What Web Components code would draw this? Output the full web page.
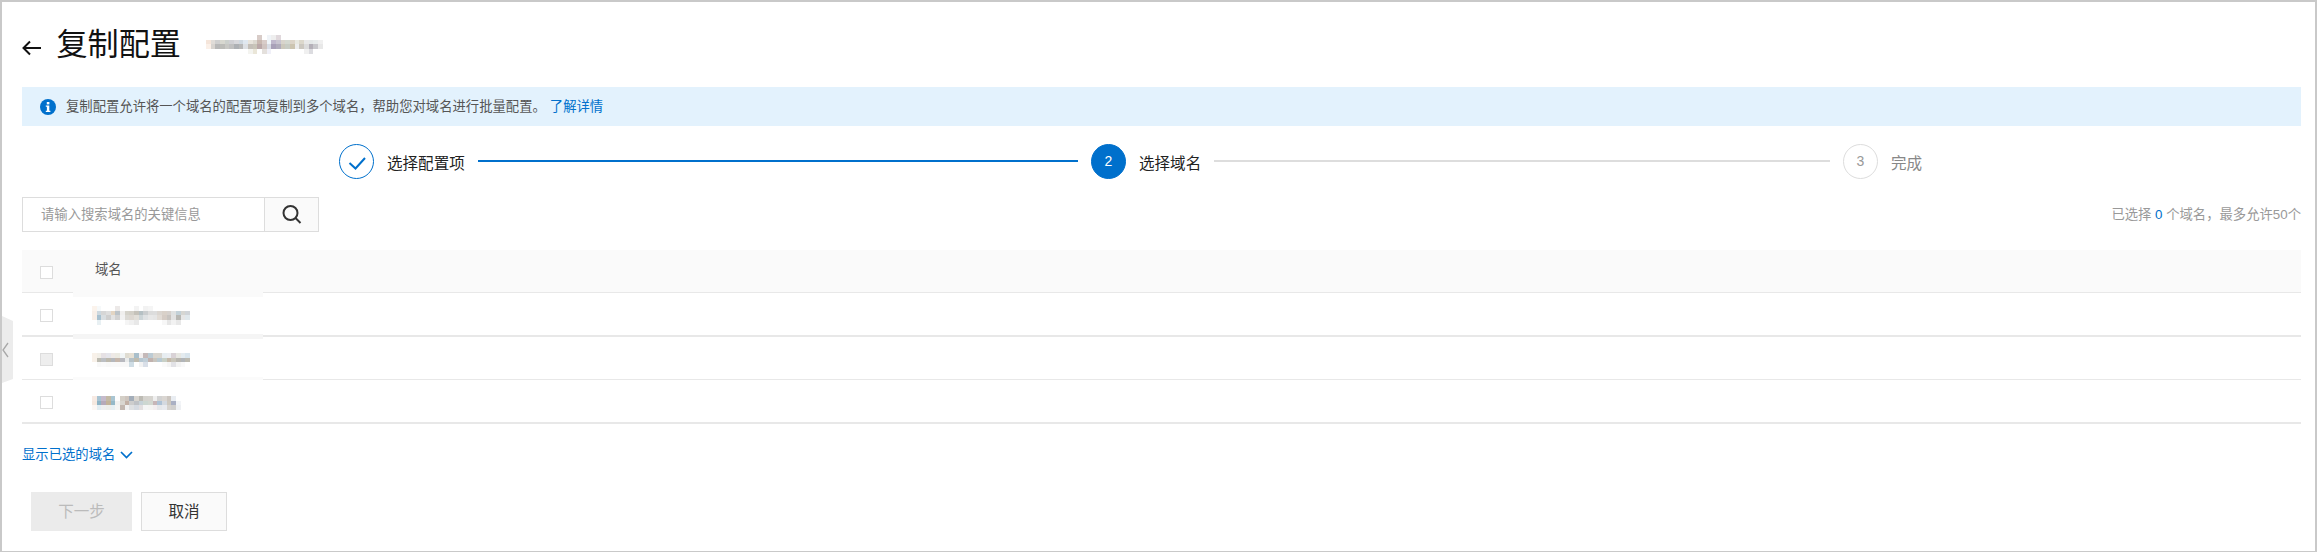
<!DOCTYPE html>
<html lang="zh-CN">
<head>
<meta charset="utf-8">
<title>复制配置</title>
<style>
html,body{margin:0;padding:0;background:#fff;}
body{font-family:"Liberation Sans","Noto Sans CJK SC",sans-serif;font-size:13.33px;color:#333;}
</style>
</head>
<body>
<app-page>
  <page-header slot="header" title-text="复制配置"></page-header>
  <info-banner link="了解详情">复制配置允许将一个域名的配置项复制到多个域名，帮助您对域名进行批量配置。</info-banner>
  <step-bar></step-bar>
  <search-bar></search-bar>
  <domain-table></domain-table>
  <show-selected></show-selected>
  <action-bar></action-bar>
</app-page>
<script>
const FONT='"Liberation Sans","Noto Sans CJK SC",sans-serif';
function def(name,html,init){
  customElements.define(name,class extends HTMLElement{
    constructor(){super();const r=this.attachShadow({mode:'open'});r.innerHTML=typeof html==='function'?html(this):html;}
    connectedCallback(){if(init)init(this);}
  });
}
/* mosaic: pixelated, obscured text */
class BlurMosaic extends HTMLElement{
  constructor(){super();this.attachShadow({mode:'open'});}
  connectedCallback(){
    const cell=parseFloat(this.getAttribute('cell')||'4.67');
    const rows=(this.getAttribute('rows')||'').trim().split('|').map(r=>r.trim().split(/\s+/));
    const cols=Math.max(...rows.map(r=>r.length));
    let rects='';
    rows.forEach((r,y)=>r.forEach((c,x)=>{if(c!=='-')rects+=`<rect x="${x}" y="${y}" width="1.02" height="1.02" fill="#${c}"/>`;}));
    this.shadowRoot.innerHTML=`<style>:host{display:inline-block;line-height:0}svg{display:block}</style><svg width="${cols*cell}" height="${rows.length*cell}" viewBox="0 0 ${cols} ${rows.length}" shape-rendering="crispEdges">${rects}</svg>`;
  }
}
customElements.define('blur-mosaic',BlurMosaic);

def('app-page',`<style>
:host{display:block;box-sizing:border-box;position:relative;width:2317px;height:552px;border:2px solid #c9c9c9;border-bottom-width:1px;padding:0 14px 0 20px;overflow:hidden;background:#fff;font-family:${FONT};}
.handle{position:absolute;left:0;top:314px;}
</style>
<slot name="header"></slot><slot></slot>
<svg class="handle" width="12" height="68" viewBox="0 0 12 68"><path d="M0 0L11 5V63L0 67Z" fill="#ececec"/><path d="M6 27L1 34L6 41" fill="none" stroke="#a8a8a8" stroke-width="1.3"/></svg>`);

def('page-header',h=>`<style>
:host{display:flex;align-items:center;height:85px;}
svg{display:block;margin-top:7px;flex:none;}
h1{margin:0 0 0 14.5px;font:400 31.1px/40px ${FONT};color:#111;}
blur-mosaic{margin:0 0 0 25px;}
</style>
<svg width="20" height="16" viewBox="0 0 20 16"><path d="M1.5 8H19M8 1.5L1.5 8L8 14.5" fill="none" stroke="#111" stroke-width="2"/></svg>
<h1>${h.getAttribute('title-text')}</h1>
<blur-mosaic rows="- - - - - - - - - - - d8ccc8 - f0f4f8 eeeeee e0d8dc - - - - - - - - -|f5e5da e0dcd8 cfcfcf d8d8d0 ccd0cc d0d0d4 d8d8dc cfd8e0 e0e8f0 e8e4dc dcd8d0 c8b8b0 d8ccc8 eef4f8 bfb8cc c8c4d0 d8d4cc d4d8d0 dcd4c8 e8e8e0 dcd8cc e8e8e8 e4e8e8 e8ecec f0f0f0|fbf0e8 d8d4d0 b8b8b8 bcbcb8 c8c8c4 c0c0c0 adb0b4 b8b8b8 dde0e4 c4bfb8 c8c4b8 baa8a8 d0c4c0 d8dce4 a8a0b8 b0acbc ccc8bc c8ccc4 ccc4b0 ececec ccc8c0 dcdcdc b4b0b8 c8c8cc e8e8e8|- - - - - - - - - f4f4f0 eae6d8 - e4e0dc f0f0f8 - - - - - - - f0f0f0 dcdce0 - -"></blur-mosaic>`);

def('info-banner',h=>`<style>
:host{display:flex;align-items:center;height:39px;background:#e3f2fd;padding-left:18px;font:13.33px/20px ${FONT};color:#555;}
svg{display:block;margin-right:10px;flex:none;}
a{color:#0070cc;text-decoration:none;margin-left:4px;}
</style>
<svg width="16" height="16" viewBox="0 0 16 16"><circle cx="8" cy="8" r="8" fill="#0070cc"/><rect x="6.8" y="3" width="2.6" height="2.4" fill="#fff"/><path d="M5.8 6.6H9.3V11.8H10.4V13H5.8V11.8H6.9V7.8H5.8Z" fill="#fff"/></svg>
<span><slot></slot></span><a href="#" part="link">${h.getAttribute('link')}</a>`);

def('step-bar',`<style>
:host{display:flex;margin:18px 0 18px 317px;height:35px;font:15.55px/35px ${FONT};}
.step{display:flex;align-items:center;width:752px;flex:none;}
.step.last{width:auto;}
.c{box-sizing:border-box;width:35px;height:35px;border-radius:50%;border:1px solid #0070cc;display:flex;align-items:center;justify-content:center;font-size:14px;flex:none;background:#fff;}
.c.on{background:#0070cc;color:#fff;}
.c.off{border-color:#ddd;color:#999;}
.l{margin-left:13px;color:#222;padding-top:3px;}
.l.off{color:#888;}
.line{flex:1;height:2px;margin:-1px 13px 0;background:#0070cc;}
.line.off{background:#ddd;}
</style>
<div class="step"><div class="c"><svg width="35" height="35" viewBox="0 0 35 35" style="flex:none"><path d="M10.5 19L16.5 24.5L26 14" fill="none" stroke="#0070cc" stroke-width="2"/></svg></div><span class="l">选择配置项</span><div class="line"></div></div>
<div class="step"><div class="c on">2</div><span class="l">选择域名</span><div class="line off"></div></div>
<div class="step last"><div class="c off">3</div><span class="l off">完成</span></div>`);

def('search-bar',`<style>
:host{display:flex;justify-content:space-between;align-items:center;height:35px;margin-bottom:18px;font:13.33px/20px ${FONT};}
.box{display:flex;box-sizing:border-box;width:297px;height:35px;border:1px solid #ddd;}
.ph{flex:1;padding-left:18px;line-height:33px;color:#999;}
.btn{width:53px;border-left:1px solid #ddd;background:#fafafa;display:flex;align-items:center;justify-content:center;}
.count{color:#999;}
.count b{font-weight:400;color:#0070cc;}
</style>
<div class="box"><div class="ph">请输入搜索域名的关键信息</div><div class="btn"><svg width="20" height="19" viewBox="0 0 20 19"><circle cx="8.5" cy="8" r="7" fill="none" stroke="#333" stroke-width="2"/><path d="M13.5 13L18.5 18" stroke="#333" stroke-width="2"/></svg></div></div>
<div class="count">已选择 <b>0</b> 个域名，最多允许50个</div>`);

def('domain-row',h=>`<style>
:host{display:flex;position:relative;box-sizing:border-box;align-items:center;height:var(--h,44px);border-bottom:var(--bw,2px) solid #e8e8e8;padding-left:18px;}
.cb{box-sizing:border-box;width:13px;height:13px;border:1px solid #ddd;background:var(--cb,#fff);margin-top:2px;flex:none;}
.cell{margin-left:39px;display:flex;align-items:center;margin-top:var(--mt,0);}
.patch{position:absolute;left:51px;width:190px;top:var(--pt,-1px);height:var(--ph,5px);background:var(--pc,#fafafa);}
</style><div class="patch"></div><div class="cb"></div><div class="cell"><slot></slot></div>`);

def('domain-table',`<style>
:host{display:block;}
.head{display:flex;align-items:center;box-sizing:border-box;height:43px;background:#fafafa;border-bottom:1px solid #e8e8e8;padding-left:18px;font:13.33px/20px ${FONT};color:#555;}
.cb{box-sizing:border-box;width:13px;height:13px;border:1px solid #ddd;background:#fff;margin-top:3px;flex:none;}
.t{margin-left:42px;margin-top:-3px;}
</style>
<div class="head"><div class="cb"></div><span class="t">域名</span></div>
<domain-row style="--h:44px;--bw:2px;--pt:-1px;--ph:5px;--pc:#fafafa;--mt:3px">
<blur-mosaic rows="fbf3ec f6f9fa - - - ece9e8 - - - f3f3f3 - f2f2f2 f5f5f5 - - - - - - - -|f8efe8 cdd8df d6d6d6 dedede e3d5c3 bcc3c8 f0efee d5d3cb d3d0c8 c5c2ba b5c0c4 cacdcf dcdcdc dddddd dbd6d1 d9d1c9 d6d1cd dfe1e1 c3d1d8 d6d6d2 d0d4d8|f8efe8 a8c1d0 d9dee1 cfcfcf e3e3e3 d2d2d2 f2f2f2 dcdad5 ddd8d2 e2dfd9 cdd5d8 dfe2e4 e8e8e8 e6e6e6 e2dcd6 d5ccc5 c8c4c0 e2e2e2 b8b8b4 e6e6e6 e0e8ec|- e8f0f3 - - - - - f5f5f5 f0f0f0 e8e8e8 - - - - - f7f7f7 e6e6e6 f2f2f2 e8e8e8 - -"></blur-mosaic>
</domain-row>
<domain-row style="--h:43px;--bw:1px;--pt:-3px;--ph:4.5px;--pc:#f5f5f5;--cb:#eee;--mt:4px">
<blur-mosaic rows="f8f1e9 f2efe8 e6e1e4 e5e5eb eee9e6 ebeae2 f1f5f6 dfdcd2 e6e0d4 a9bfcb f2eeee c5b9b9 bccbd4 d9d6d0 d9d6cf e7edf1 ebeef2 d9d2d6 e7e7e2 e4ebef d9e5ed|f8f1e9 bdbcb2 bcbfc3 bdb9ad b5b8bd c6b7ac b8b9bf e9ebeb b5c1c7 c0bcaf b7c8d3 c1cfd8 c1b2ae c8c5be b8c9d2 c8d0c6 c5b9a9 c9c6bb b8b6b0 b1b5b9 bcbab0|- f8f8f8 fafafa f8f8f8 f9f9f9 f9f9f9 f8f8f8 f8f8f8 cfdde5 - f2f2f2 d9dfe8 - - - fafafa f4f4f4 e2e2e6 f3f3f3 f9f9f9 -"></blur-mosaic>
</domain-row>
<domain-row style="--h:44px;--bw:2px;--pt:-3px;--ph:3px;--pc:#fbfbfb;--mt:4px">
<blur-mosaic rows="f7eae3 a8c3d2 c5bacb c3b9a5 a9c5d2 fdfdfd d4cfc7 cec5be a3adb9 d9d5cf bdbbb4 d5d3ce d6d4cf efefef d2d2d2 dad6d2 ccc6c0 e9edf2 -|f5e8df 8fb4c6 b6a9b9 c2b299 95b9c8 f2f2f0 d9d6d0 c2b0a5 cdcdcd bfc2c6 c7d2d8 cdd7d1 d3d8d1 c7b6b8 aec2d6 d4d9e0 cdc8c0 aab0c4 f2f4f7|fcf7f4 e3edf2 eeeeef ededea e6eff2 f5f5f3 c2b7b0 f1f1f1 dfe1e3 d6dbe2 e3dfe0 f5f5f5 f4f4f2 f3eef0 e5e7ea e8eaef d6d3cf d0cfce eef0f3"></blur-mosaic>
</domain-row>`);

def('show-selected',`<style>
:host{display:flex;align-items:center;height:18px;margin-top:22px;font:13.33px/18px ${FONT};color:#0070cc;}
svg{margin-left:5px;display:block;}
</style><span>显示已选的域名</span><svg width="13" height="8" viewBox="0 0 13 8"><path d="M1 1L6.5 6.5L12 1" fill="none" stroke="#0070cc" stroke-width="1.7"/></svg>`);

def('action-bar',`<style>
:host{display:flex;gap:9px;margin:28px 0 0 9px;font:15.55px/37px ${FONT};}
.b{box-sizing:border-box;height:39px;border:1px solid #ddd;background:#fafafa;color:#333;text-align:center;}
.next{width:101px;background:#ebebeb;border-color:#ebebeb;color:#bbb;}
.cancel{width:86px;}
</style><div class="b next">下一步</div><div class="b cancel">取消</div>`);
</script>
</body>
</html>
